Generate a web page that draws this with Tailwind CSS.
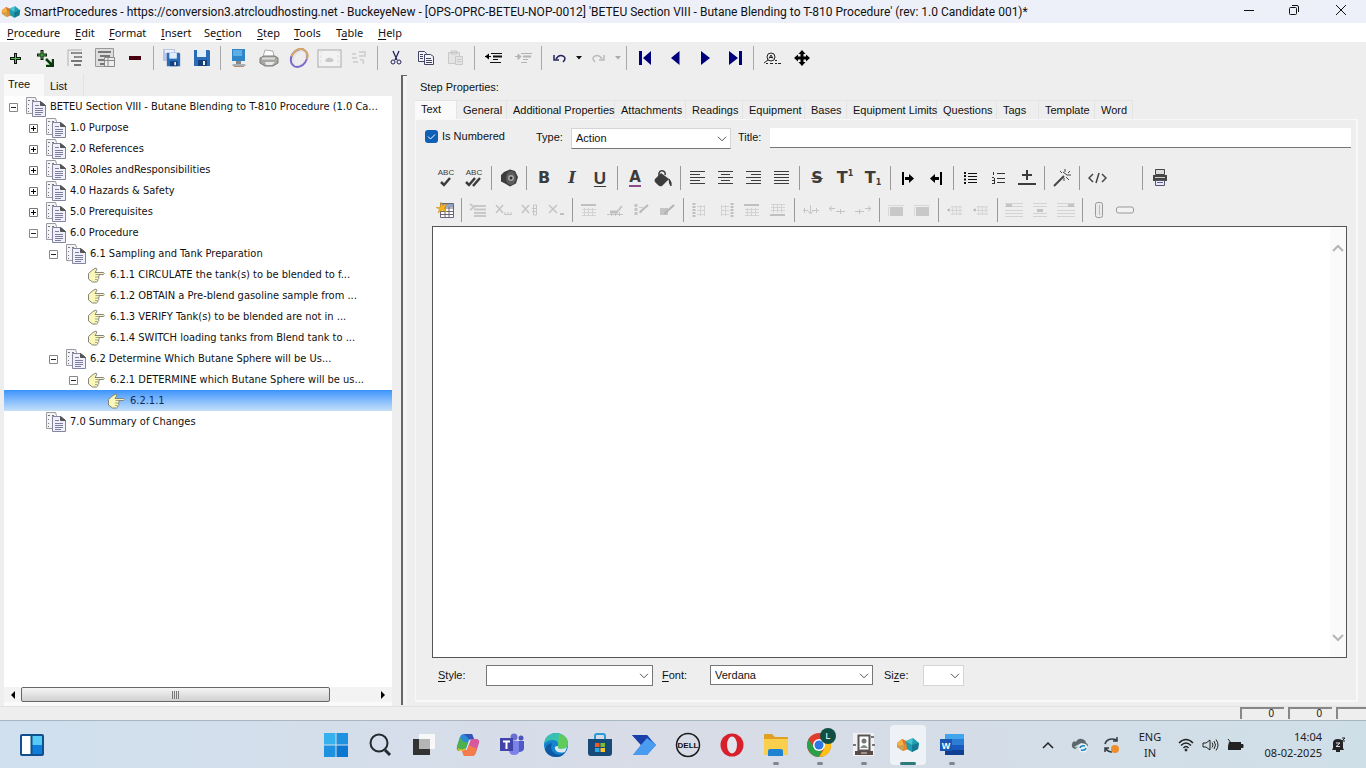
<!DOCTYPE html>
<html lang="en">
<head>
<meta charset="utf-8">
<title>SmartProcedures</title>
<script src="https://cdn.jsdelivr.net/npm/@tailwindcss/browser@4"></script>
</head>
<body class="h-screen flex flex-col overflow-hidden bg-[#eeeeee] text-[#111] font-['Liberation_Sans',sans-serif] text-[11px]">
<svg class="hidden" aria-hidden="true">
  <symbol id="logo" viewBox="0 0 24 16">
    <path d="M1 6 6 2 12 5 13 12 7 14 1 10z" fill="#e88a2a"/><path d="M1 6 6 2 8 8 2 9z" fill="#f6b04a"/><path d="M6 2 12 5 8 8z" fill="#d9752a"/><path d="M1 10 8 8 7 14z" fill="#c9a35a"/>
    <path d="M10 4 17 1 23 6 22 12 16 15 11 12z" fill="#1f9cb0"/><path d="M10 4 17 1 16 8z" fill="#4cc3cf"/><path d="M16 8 23 6 22 12 16 15z" fill="#157a92"/>
  </symbol>
  <symbol id="doc" viewBox="0 0 20 20">
    <path d="M.5 .5h9l1 3v13h-10z" fill="#f4f4f6" stroke="#9a9aa2"/><path d="M2 3.500h2M6 3.500h2M2 7.500h1M2 11.500h1M2 14.500h1" stroke="#777"/>
    <path d="M6.500 4.500h8l5 4v11h-13z" fill="#f0f0fa" stroke="#8484a0"/><path d="M14.500 4.500v4h5z" fill="#555" stroke="#555"/><path d="M9 8.500h4M9 11.500h8M9 13.500h8M9 15.500h8M9 17.500h6" stroke="#7d7da0"/>
  </symbol>
  <symbol id="hand" viewBox="0 0 20 18">
    <path d="M2.500 7.500 7 3.500l3-1.500q1.500 1 0 3l-1 1.500h8.500q1.500 1 0 2h-5q1.500 1.500 0 2.500 1 1.500-.5 2.500 0 2-1.500 2.500H6.500l-4-3z" fill="#fbf7b8" stroke="#84847a"/><path d="M9.500 8.500h3M9 11h3M9 13.500h2" stroke="#a5a58f"/>
  </symbol>
  <symbol id="plusbox" viewBox="0 0 9 9"><path d="M.5.5h8v8h-8z" fill="#fff" stroke="#777"/><path d="M2 4.500h5M4.500 2v5" stroke="#000"/></symbol>
  <symbol id="minusbox" viewBox="0 0 9 9"><path d="M.5.5h8v8h-8z" fill="#fff" stroke="#888"/><path d="M2 4.500h5" stroke="#222"/></symbol>
  <symbol id="chev" viewBox="0 0 10 6"><path d="M1 .8 5 4.800 9 .8" fill="none" stroke="#555"/></symbol>
  <symbol id="floppy" viewBox="0 0 18 18"><path d="M1 1h15l1 1v15H1z" fill="#2b6cb8"/><path d="M4 1h9v7H4z" fill="#dfeefa"/><path d="M5 11h9v6H5z" fill="#173f7a"/><path d="M10 12h2v4h-2z" fill="#e8f0fa"/></symbol>
  <symbol id="tgridtop" viewBox="0 0 18 16"><path d="M1 3h15" stroke="#c0c0c0" stroke-width="2"/><path d="M2 7.500h14M2 10.500h14M2 13.500h14M4.500 6v8M8.500 6v8M12.500 6v8" stroke="#d2d2d2" fill="none"/></symbol>
  <symbol id="tgridbot" viewBox="0 0 18 16"><path d="M1 13h15" stroke="#c0c0c0" stroke-width="2"/><path d="M2 2.500h14M2 5.500h14M2 8.500h14M4.500 2v9M8.500 2v9M12.500 2v9" stroke="#d2d2d2" fill="none"/></symbol>
  <symbol id="tdelx" viewBox="0 0 18 16"><path d="m1 3 7 8M8 3l-7 8" stroke="#c4c4c4" stroke-width="1.500"/><path d="M9 12.500h8M10 10v3M13 10v3M16 10v3" stroke="#c6c6c6"/></symbol>
  <symbol id="tdelc" viewBox="0 0 18 16"><path d="m1 3 7 8M8 3l-7 8" stroke="#c4c4c4" stroke-width="1.500"/><path d="M12.500 3h3v10h-3zM11 6.500h5M11 9.500h5" fill="none" stroke="#c6c6c6"/></symbol>
  <symbol id="tdel" viewBox="0 0 18 16"><path d="m2 3 8 8M10 3l-8 8" stroke="#c4c4c4" stroke-width="1.500"/><path d="M13 12h4" stroke="#c0c0c0" stroke-width="2"/></symbol>
  <symbol id="tbrushcol" viewBox="0 0 18 16"><path d="M4 2v12" stroke="#c4c4c4" stroke-width="3" stroke-dasharray="3 1"/><path d="M7 10.500h3M7 5.500h4" stroke="#ccc"/><path d="m8 10 8-7" stroke="#b8b8b8" stroke-width="2"/></symbol>
  <symbol id="tbrush" viewBox="0 0 18 16"><path d="M2 6h8v7H2z" fill="#c4c4c4"/><path d="m6 12 10-9" stroke="#b3b3b3" stroke-width="2"/></symbol>
  <symbol id="tcell" viewBox="0 0 18 16"><path d="M1 12.500h16M5.500 10v4M9.500 10v4M13.500 10v4" stroke="#c4c4c4"/><path d="M4 10h8" stroke="#c0c0c0" stroke-width="3"/><path d="m12 9 4-5" stroke="#c4c4c4" stroke-width="2"/></symbol>
  <symbol id="tcol" viewBox="0 0 18 16"><path d="M3 1v14" stroke="#c0c0c0" stroke-width="3" stroke-dasharray="2 1"/><path d="M6 4.500h8M6 8.500h8M6 12.500h8M9.500 3v11M13.500 3v11" stroke="#d2d2d2"/></symbol>
  <symbol id="tins" viewBox="0 0 18 16"><path d="M1 8.500h5M10 8.500h7M2.500 6v5M14.500 6v5M8.500 3v9M6 9l2.500 3L11 9" fill="none" stroke="#c6c6c6"/></symbol>
  <symbol id="tmerge" viewBox="0 0 18 16"><path d="M3 5h13v9H3z" fill="#c8c8c8"/><path d="M1 3.500h16M1.500 5v9" stroke="#d8d8d8"/></symbol>
  <symbol id="tsplit" viewBox="0 0 20 16"><path d="m4 6-3 2 3 2z" fill="#b0b0b0"/><path d="M5 4.500h13M5 8.500h13M5 12.500h13M7.500 4v9M11.500 4v9M15.500 4v9" stroke="#d0d0d0"/></symbol>
</svg>

<header class="h-[23px] shrink-0 flex items-center bg-[#eef0f9] pl-px">
  <svg class="w-5 h-4" aria-hidden="true"><use href="#logo"/></svg>
  <h1 class="ml-[3px] flex-1 whitespace-nowrap font-['Roboto',sans-serif] text-[12px]">SmartProcedures - https://conversion3.atrcloudhosting.net - BuckeyeNew - [OPS-OPRC-BETEU-NOP-0012] 'BETEU Section VIII - Butane Blending to T-810 Procedure' (rev: 1.0 Candidate 001)*</h1>
  <button aria-label="Minimize" class="w-[45px] pb-1 grid place-items-center"><svg width="12" height="12"><path d="M1 6.500h10" stroke="#111"/></svg></button>
  <button aria-label="Restore" class="w-[45px] pb-1 grid place-items-center"><svg width="12" height="12" fill="none" stroke="#111"><rect x="1.500" y="3.500" width="7" height="7" rx="1"/><path d="M4 1.500h5q1.500 0 1.500 1.500v5"/></svg></button>
  <button aria-label="Close" class="w-[50px] pb-1 grid place-items-center"><svg width="12" height="12" stroke="#111"><path d="m1 1 10 10M11 1 1 11"/></svg></button>
</header>

<nav class="h-[19px] shrink-0 flex items-center bg-white pl-[7px] pt-0.5 font-['Noto_Sans',sans-serif] text-[11px] [&_u]:underline-offset-2">
  <button class="w-[68px] text-left"><u>P</u>rocedure</button><button class="w-[34px] text-left"><u>E</u>dit</button><button class="w-[52px] text-left"><u>F</u>ormat</button><button class="w-[43px] text-left"><u>I</u>nsert</button><button class="w-[53px] text-left">Se<u>c</u>tion</button><button class="w-[37px] text-left"><u>S</u>tep</button><button class="w-[42px] text-left"><u>T</u>ools</button><button class="w-[42px] text-left">T<u>a</u>ble</button><button class="text-left"><u>H</u>elp</button>
</nav>

<div role="toolbar" aria-label="Main" class="h-8 shrink-0 flex items-center [&>button]:w-[30px] [&>button]:h-6 [&>button]:grid [&>button]:place-items-center [&>button]:shrink-0 [&>i]:w-px [&>i]:h-6 [&>i]:mx-[3px] [&>i]:bg-[#a8a8a8] [&>i]:shrink-0">
  <button aria-label="Add"><svg width="13" height="13"><path d="M6.500 1v11M1 6.500h11" stroke="#0a1a0a" stroke-width="3"/><path d="M6.500 2v9M2 6.500h9" stroke="#4fc04f" stroke-width="1"/></svg></button>
  <button aria-label="Add child"><svg width="18" height="18"><path d="M6 1v10M1 6h10" stroke="#0a1a0a" stroke-width="3"/><path d="M6 2v8M2 6h8" stroke="#4fc04f" stroke-width="1"/><path d="m10 10 6 6M17 10v7h-7" fill="none" stroke="#0a3a0a" stroke-width="2.500"/></svg></button>
  <button aria-label="Outline"><svg width="16" height="18" fill="none"><path d="M15 1H1v16" stroke="#b0b0b0"/><path d="M4 4h11M7 8h8M4 12h11M7 16h7" stroke="#777" stroke-width="2"/><path d="M5 4h9M8 8h6" stroke="#aaa"/></svg></button>
  <button aria-label="Details"><svg width="20" height="20"><path d="M.5.5h18v18H.500z" fill="#ddd" stroke="#999"/><path d="M3 4h13M5 8h10M3 12h6M5 16h4" stroke="#777" stroke-width="2"/><path d="M9.500 9.500h10v9h-10zM9.500 12.500h10M13 10v8" fill="#eee" stroke="#888"/></svg></button>
  <button aria-label="Remove"><svg width="12" height="4"><path d="M0 0h12v4H0z" fill="#4a0010"/></svg></button><i></i>
  <button aria-label="Save all"><svg width="20" height="18"><path d="M1 0h12v12H1z" fill="#b8c6e4"/><path d="M3 1h9v3H3z" fill="#eef"/><svg x="4" y="3" width="15" height="15"><use href="#floppy"/></svg></svg></button>
  <button aria-label="Save"><svg width="18" height="18"><use href="#floppy"/></svg></button><i></i>
  <button aria-label="Screen"><svg width="16" height="20"><path d="M1 1h13v12H1z" fill="#2e86c8"/><path d="M2 2h9v6H2z" fill="#5eaee4"/><path d="M5 13h5v3H5z" fill="#888"/><path d="M2 16h12l1 2H1z" fill="#a9b0b8"/><path d="M3 18.500h10" stroke="#b88a70"/></svg></button>
  <button aria-label="Print"><svg width="20" height="18"><path d="m6 1 8 1 1 6H4z" fill="#fff" stroke="#aaa"/><path d="M1 9 5 7h11l3 2v5l-5 3H6l-5-3z" fill="#a6a6a2" stroke="#7b7b7b"/><path d="M3 9.500h13" stroke="#ddd" stroke-width="2"/><path d="M6 13h10l-3 3H7z" fill="#e8e8e8"/></svg></button>
  <button aria-label="Ring"><svg width="22" height="22" fill="none"><g transform="rotate(35 11 11)"><ellipse cx="11" cy="11" rx="7.500" ry="9.500" stroke="#7a68c8" stroke-width="2"/><path d="M4 14Q2 3 11 1.500q6 0 7 6" stroke="#d8a860" stroke-width="2"/><ellipse cx="11.500" cy="11" rx="5.500" ry="8" stroke="#e2dcea"/></g></svg></button>
  <button aria-label="Preview" disabled><svg width="25" height="19" fill="none"><rect x="1" y="1" width="23" height="17" stroke="#aaa" fill="#f3f3f3"/><path d="M4 1v17M21 1v17" stroke="#ddd" stroke-dasharray="3 2"/><path d="M8 11q4-5 9 0l-2 2H9z" fill="#c9c9c9"/></svg></button>
  <button aria-label="Refresh" disabled><svg width="16" height="16"><path d="M1 4h4M8 2h6v4H8M1 8h5M2 12h5M9 10q5-1 3 4" stroke="#d4d4d4" stroke-width="2" fill="none"/></svg></button><i></i>
  <button aria-label="Cut"><svg width="12" height="16" fill="none" stroke="#23235e"><path d="m3 1 4 9M9 1 5 10" stroke-width="1.300"/><circle cx="3" cy="12" r="2"/><circle cx="9" cy="12" r="2"/></svg></button>
  <button aria-label="Copy"><svg width="18" height="16" fill="#f4f4fa" stroke="#444466"><path d="M1.500 1.500h6l2 2v8h-8z"/><path d="M7.500 4.500h6l3 2v8h-9z"/><path d="M9 8.500h5M9 10.500h6M9 12.500h6M3 4.500h3M3 6.500h3M3 8.500h3"/></svg></button>
  <button aria-label="Paste" disabled><svg width="18" height="16" fill="#e4e4e4" stroke="#c9c9c9"><path d="M1.500 2.500h11v11h-11zM4 1h6v3H4z"/><path d="M8.500 6.500h7v8h-7z"/><path d="M10 9.500h4M10 11.500h4"/></svg></button><i></i>
  <button aria-label="Outdent"><svg width="17" height="14" stroke="#111"><path d="M0 5.500h6M6 2.500h11M8 8.500h5M5 11.500h11"/><path d="M8 5.500h9" stroke-width="2"/><path d="M4 2.500 0 5.500l4 3z" stroke="none"/></svg></button>
  <button aria-label="Indent" disabled><svg width="17" height="14" stroke="#b4b4b4"><path d="M0 5.500h6M6 2.500h11M8 8.500h5M6 11.500h6"/><path d="M8 5.500h8" stroke-width="2"/><path d="m3 3 3 2.500-3 3z" fill="#b4b4b4"/></svg></button><i></i>
  <div class="flex items-center [&>button]:h-6 [&>button]:grid [&>button]:place-items-center">
    <button aria-label="Undo" class="w-7"><svg width="13" height="10" fill="none" stroke="#23235e" stroke-width="1.500"><path d="M3 6q3-5 7-3t0 6"/><path d="M1 2v5h5" /></svg></button>
    <button aria-label="Undo list" class="w-[11px]"><svg width="6" height="4"><path d="M0 0h6L3 3.500z" fill="#111"/></svg></button>
    <button aria-label="Redo" disabled class="w-7"><svg width="13" height="10" fill="none" stroke="#bbb" stroke-width="1.500"><path d="M10 6Q7 1 3 3t0 6"/><path d="M12 2v5H7"/></svg></button>
    <button aria-label="Redo list" disabled class="w-[11px]"><svg width="6" height="4"><path d="M0 0h6L3 3.500z" fill="#aaa"/></svg></button>
  </div><i></i>
  <button aria-label="First"><svg width="13" height="14" fill="#00007c"><path d="M0 0h3v14H0zM12 0v14L4 7z"/></svg></button>
  <button aria-label="Previous"><svg width="9" height="14" fill="#00007c"><path d="M8.500 0v14L0 7z"/></svg></button>
  <button aria-label="Next"><svg width="9" height="14" fill="#00007c"><path d="M0 0v14l9-7z"/></svg></button>
  <button aria-label="Last"><svg width="13" height="14" fill="#00007c"><path d="M10 0h3v14h-3zM0 0v14l9-7z"/></svg></button><i></i>
  <button aria-label="Find"><svg width="17" height="12" fill="none" stroke="#222"><circle cx="7" cy="5" r="4"/><path d="m4 8-4 3M5 6.500 7 3l2 3.500M6 5.500h2M2 11.500h2M6 11.500h3M11 8.500h2M11 11.500h2M14 11.500h3"/></svg></button>
  <button aria-label="Move"><svg width="16" height="16"><path d="M8 2v12M2 8h12" stroke="#000" stroke-width="3"/><path d="m8 0 3.500 4h-7zM8 16l3.500-4h-7zM0 8l4-3.500v7zM16 8l-4-3.500v7z"/></svg></button>
</div>

<main class="flex-1 min-h-0 flex">
  <section class="w-[397px] shrink-0 flex flex-col pl-1">
    <div role="tablist" class="h-[22px] flex">
      <button role="tab" aria-selected="true" class="w-10 pl-1 text-left bg-[#f9f9f9] pb-0.5">Tree</button>
      <button role="tab" class="w-10 pl-1.5 pt-0.5 text-left border-r border-[#e2e2e2]">List</button>
    </div>
    <ul role="tree" class="flex-1 bg-white mr-[5px] font-['DejaVu_Sans_Condensed','DejaVu_Sans',sans-serif] text-[11px] [&>li]:h-[21px] [&>li]:flex [&>li]:items-center [&>li]:whitespace-nowrap [&>li]:pt-px [&_.x]:w-[9px] [&_.x]:h-[9px] [&_.x]:mr-2 [&_.d]:w-5 [&_.d]:h-5 [&_.d]:mr-1 [&_.h]:w-5 [&_.h]:h-[18px] [&_.h]:mr-1">
      <li role="treeitem" class="pl-[5px]"><svg class="x"><use href="#minusbox"/></svg><svg class="d"><use href="#doc"/></svg><span class="pt-px">BETEU Section VIII - Butane Blending to T-810 Procedure (1.0 Ca...</span></li>
      <li role="treeitem" class="pl-[25px]"><svg class="x"><use href="#plusbox"/></svg><svg class="d"><use href="#doc"/></svg><span class="pt-px">1.0 Purpose</span></li>
      <li role="treeitem" class="pl-[25px]"><svg class="x"><use href="#plusbox"/></svg><svg class="d"><use href="#doc"/></svg><span class="pt-px">2.0 References</span></li>
      <li role="treeitem" class="pl-[25px]"><svg class="x"><use href="#plusbox"/></svg><svg class="d"><use href="#doc"/></svg><span class="pt-px">3.0Roles andResponsibilities</span></li>
      <li role="treeitem" class="pl-[25px]"><svg class="x"><use href="#plusbox"/></svg><svg class="d"><use href="#doc"/></svg><span class="pt-px">4.0 Hazards &amp; Safety</span></li>
      <li role="treeitem" class="pl-[25px]"><svg class="x"><use href="#plusbox"/></svg><svg class="d"><use href="#doc"/></svg><span class="pt-px">5.0 Prerequisites</span></li>
      <li role="treeitem" class="pl-[25px]"><svg class="x"><use href="#minusbox"/></svg><svg class="d"><use href="#doc"/></svg><span class="pt-px">6.0 Procedure</span></li>
      <li role="treeitem" class="pl-[45px]"><svg class="x"><use href="#minusbox"/></svg><svg class="d"><use href="#doc"/></svg><span class="pt-px">6.1 Sampling and Tank Preparation</span></li>
      <li role="treeitem" class="pl-[82px]"><svg class="h"><use href="#hand"/></svg><span class="pt-px">6.1.1 CIRCULATE the tank(s) to be blended to f...</span></li>
      <li role="treeitem" class="pl-[82px]"><svg class="h"><use href="#hand"/></svg><span class="pt-px">6.1.2 OBTAIN a Pre-blend gasoline sample from ...</span></li>
      <li role="treeitem" class="pl-[82px]"><svg class="h"><use href="#hand"/></svg><span class="pt-px">6.1.3 VERIFY Tank(s) to be blended are not in ...</span></li>
      <li role="treeitem" class="pl-[82px]"><svg class="h"><use href="#hand"/></svg><span class="pt-px">6.1.4 SWITCH loading tanks from Blend tank to ...</span></li>
      <li role="treeitem" class="pl-[45px]"><svg class="x"><use href="#minusbox"/></svg><svg class="d"><use href="#doc"/></svg><span class="pt-px">6.2 Determine Which Butane Sphere will be Us...</span></li>
      <li role="treeitem" class="pl-[65px]"><svg class="x"><use href="#minusbox"/></svg><svg class="h"><use href="#hand"/></svg><span class="pt-px">6.2.1 DETERMINE which Butane Sphere will be us...</span></li>
      <li role="treeitem" aria-selected="true" class="pl-[102px] bg-linear-to-b from-[#3893fb] to-[#c5e0f8] text-[#0a2c5e]"><svg class="h"><use href="#hand"/></svg><span class="pt-px">6.2.1.1</span></li>
      <li role="treeitem" class="pl-[42px]"><svg class="d"><use href="#doc"/></svg><span class="pt-px">7.0 Summary of Changes</span></li>
    </ul>
    <div class="h-[15px] mr-[5px] flex items-center bg-[#f3f3f3]">
      <button aria-label="Scroll left" class="w-[17px] grid place-items-center"><svg width="4" height="8"><path d="M4 0v8L0 4z"/></svg></button>
      <div class="w-[309px] h-[15px] rounded-[2px] border border-[#666] bg-linear-to-b from-[#f5f5f5] to-[#d0d0d0] flex justify-center items-center gap-px"><i class="w-px h-2 bg-[#777]"></i><i class="w-px h-2 bg-[#777]"></i><i class="w-px h-2 bg-[#777]"></i><i class="w-px h-2 bg-[#777]"></i></div>
      <span class="flex-1"></span>
      <button aria-label="Scroll right" class="w-[19px] grid place-items-center"><svg width="4" height="8"><path d="M0 0v8l4-4z"/></svg></button>
    </div>
    <div class="h-1 bg-[#fafafa] mr-[5px]"></div>
  </section>
  <div class="w-[6px] my-px ml-1 mr-2 border-l-2 border-t border-[#666] border-r-[#fff] bg-[#f3f3f3] shrink-0"></div>

  <section class="flex-1 min-w-0 flex flex-col pr-2 pb-1">
    <h2 class="h-[26px] pl-[5px] leading-[26px]">Step Properties:</h2>
    <div role="tablist" class="h-[19px] flex [&>button]:text-left [&>button]:pl-1.5 [&>button]:border-r [&>button]:border-t [&>button]:border-[#e4e4e4] [&>button]:whitespace-nowrap">
      <button role="tab" aria-selected="true" class="w-[42px] bg-[#fafafa] pb-1">Text</button><button role="tab" class="w-[50px]">General</button><button role="tab" class="w-[108px]">Additional Properties</button><button role="tab" class="w-[71px]">Attachments</button><button role="tab" class="w-[57px]">Readings</button><button role="tab" class="w-[62px]">Equipment</button><button role="tab" class="w-[42px]">Bases</button><button role="tab" class="w-[90px]">Equipment Limits</button><button role="tab" class="w-[60px]">Questions</button><button role="tab" class="w-[42px]">Tags</button><button role="tab" class="w-[56px]">Template</button><button role="tab" class="w-[38px]">Word</button>
    </div>
    <div role="tabpanel" class="flex-1 min-h-0 flex flex-col border border-[#f8f8f8] border-b-2 border-r-2 pl-4 pr-[5px] pt-[7px]">
      <div class="h-[22px] shrink-0 flex items-center">
        <label class="-ml-[7px] flex items-center gap-1 w-[111px] pb-1 whitespace-nowrap"><span class="grid"><input type="checkbox" checked class="col-start-1 row-start-1 appearance-none w-[13px] h-[13px] rounded-[3px] bg-[#0f5fb4]"><svg class="col-start-1 row-start-1 pointer-events-none" width="13" height="13" fill="none" stroke="#fff"><path d="m3 6.500 2.500 2.500L10 4.500"/></svg></span>Is Numbered</label>
        <label for="type" class="w-[35px] pb-0.5 whitespace-nowrap">Type:</label>
        <div class="relative"><select id="type" class="block appearance-none w-40 h-[21px] bg-white border border-[#d5d5d5] border-b-[#777] pl-1 leading-none"><option>Action</option></select><svg class="absolute right-1 top-2 w-[10px] h-[6px] pointer-events-none"><use href="#chev"/></svg></div>
        <label for="title" class="ml-[7px] w-8 pb-0.5">Title:</label>
        <input id="title" class="flex-1 min-w-0 h-[20px] bg-white border-b border-[#777] px-1">
      </div>
      <div role="toolbar" aria-label="Formatting" class="mt-4 h-[26px] shrink-0 flex items-center text-[#3c3c3c] [&>button]:w-7 [&>button]:h-6 [&>button]:grid [&>button]:place-items-center [&>button]:shrink-0 [&>i]:w-px [&>i]:h-6 [&>i]:mx-[3px] [&>i]:bg-[#999] [&>i]:shrink-0">
        <button aria-label="Spelling"><span class="grid justify-items-center text-[8px] leading-[8px]">ABC<svg width="12" height="10" fill="none" stroke="#3c3c3c" stroke-width="2.500"><path d="m1 5 3 3 6-7"/></svg></span></button>
        <button aria-label="Spelling all"><span class="grid justify-items-center text-[8px] leading-[8px]">ABC<svg width="18" height="10" fill="none" stroke="#3c3c3c" stroke-width="2.500"><path d="m1 5 3 3 6-7M8 9l7-8"/></svg></span></button><i></i>
        <button aria-label="Speak"><svg width="18" height="18"><path d="M4 3 10 .5l5 1.500 3 6-2 6.500-6 3-5-3-4-2V6z" fill="#3d3d3d"/><ellipse cx="11" cy="9" rx="5" ry="7" fill="#5c5c5c"/><circle cx="11" cy="9" r="3" fill="#aaa"/><circle cx="11" cy="9" r="1.500" fill="#333"/></svg></button><i></i>
        <button aria-label="Bold" class="font-['DejaVu_Sans',sans-serif] font-bold text-[16px]">B</button>
        <button aria-label="Italic" class="font-['DejaVu_Serif',serif] font-bold italic text-[16px]">I</button>
        <button aria-label="Underline" class="font-bold underline underline-offset-2 text-[17px]">U</button><i></i>
        <button aria-label="Text color" class="font-['DejaVu_Sans',sans-serif] font-bold text-[15px]"><span class="leading-4 border-b-2 border-[#8c4a8c]">A</span></button>
        <button aria-label="Fill"><svg width="18" height="18"><path d="M5 8V4q1-3 4-2t2 4" fill="none" stroke="#3c3c3c" stroke-width="1.500"/><path d="m7 4 8 6-7 7q-2 1-4-1l-3-3q-1-2 0-3z" fill="#3c3c3c"/><path d="M15 10q3 3 2 7-2-2-2-7" fill="#3c3c3c" stroke="#3c3c3c"/></svg></button><i></i>
        <button aria-label="Align left"><svg width="16" height="14" stroke="#3c3c3c"><path d="M0 .5h15M0 3.500h10M0 6.500h15M0 9.500h10M0 12.500h15"/></svg></button>
        <button aria-label="Align center"><svg width="16" height="14" stroke="#3c3c3c"><path d="M0 .5h15M3 3.500h9M0 6.500h15M3 9.500h9M0 12.500h15"/></svg></button>
        <button aria-label="Align right"><svg width="16" height="14" stroke="#3c3c3c"><path d="M0 .5h15M5 3.500h10M0 6.500h15M5 9.500h10M0 12.500h15"/></svg></button>
        <button aria-label="Justify"><svg width="16" height="14" stroke="#3c3c3c"><path d="M0 .5h15M0 3.500h15M0 6.500h15M0 9.500h15M0 12.500h15"/></svg></button><i></i>
        <button aria-label="Strikethrough" class="font-['DejaVu_Sans',sans-serif] font-bold line-through decoration-1 text-[16px]">S</button>
        <button aria-label="Superscript" class="font-['DejaVu_Sans',sans-serif] font-bold text-[16px]"><span class="flex items-start leading-4">T<small class="text-[8px] leading-[8px]">1</small></span></button>
        <button aria-label="Subscript" class="font-['DejaVu_Sans',sans-serif] font-bold text-[16px]"><span class="flex items-end leading-4">T<small class="text-[8px] leading-[6px]">1</small></span></button><i></i>
        <button aria-label="Increase indent"><svg width="12" height="13"><path d="M0 0h2v13H0zM3 5h4V2l5 4.500L7 11V8H3z" fill="#000"/></svg></button>
        <button aria-label="Decrease indent"><svg width="12" height="13"><path d="M10 0h2v13h-2zM9 5H5V2L0 6.500 5 11V8h4z" fill="#000"/></svg></button><i></i>
        <button aria-label="Bullets"><svg width="14" height="12" stroke="#111"><path d="M0 1h2M0 4h2M0 7.500h2M0 11h2" stroke-width="2"/><path d="M4 1.500h9M4 4.500h9M4 7.500h9M4 10.500h9"/></svg></button>
        <button aria-label="Numbering"><svg width="14" height="12" stroke="#333"><path d="M1.500 0v3M0 5.500h2M0 8.500h3M0 11.500h3M2.500 6v6M5 1.500h8M5 6.500h8M5 10.500h8"/></svg></button>
        <button aria-label="Insert line"><svg width="18" height="16" stroke="#3c3c3c" stroke-width="2"><path d="M9 0v10M4 5h10M0 14h18"/></svg></button><i></i>
        <button aria-label="Clean up"><svg width="18" height="18" stroke="#444" fill="none"><path d="m1 17 10-10" stroke-width="2"/><path d="M12 0v3M7 2l2 2M17 2l-2 2M14 6h4M13 8l3 3M11 9v3M10 3l4 3"/></svg></button><i></i>
        <button aria-label="Source"><svg width="19" height="12" fill="none" stroke="#444" stroke-width="1.500"><path d="M5 2 1 6l4 4M14 2l4 4-4 4M11 1 8 11"/></svg></button><span class="w-7 shrink-0"></span><i></i>
        <button aria-label="Print"><svg width="14" height="18"><path d="M2.500.5h9v5h-9z" fill="#ddd" stroke="#444"/><path d="M0 6h14v6H0z" fill="#444"/><path d="M2 8.500h10" stroke="#ccc"/><path d="M2.500 11.500h9v5h-9z" fill="#e8e8ff" stroke="#556"/><path d="M4 13.500h6" stroke="#669"/></svg></button>
      </div>
      <div role="toolbar" aria-label="Table" class="mt-[7px] h-6 shrink-0 flex items-center [&>button]:w-[26px] [&>button]:h-6 [&>button]:grid [&>button]:place-items-center [&>button]:shrink-0 [&_svg]:w-[18px] [&_svg]:h-4 [&>i]:w-px [&>i]:h-6 [&>i]:mx-[3px] [&>i]:bg-[#999] [&>i]:shrink-0">
        <button aria-label="Insert table"><svg viewBox="0 0 18 16"><path d="M4.500 1.500h13v14h-13zM4.500 6h13M4.500 9.500h13M4.500 12.500h13M9 3v12M13 3v12" fill="#fff" stroke="#667"/><path d="M5 2h12v3H5z" fill="#8fa4c4"/><path d="m5 0 1.500 3.500L11 2 8.500 6l2 4L6 8l-4 3 1.500-4L0 5.500h4z" fill="#f5b51e" stroke="#c98a10" stroke-width=".5"/></svg></button><i></i>
        <button disabled aria-label="Insert row"><svg viewBox="0 0 18 16"><path d="m1 2 4 3-4 3M5 4h12M5 7.500h12M5 11h12M5 14h12" stroke="#c8c8c8" fill="none" stroke-width="2"/></svg></button>
        <button disabled aria-label="Delete row"><svg><use href="#tdelx"/></svg></button><button disabled aria-label="Delete column"><svg><use href="#tdelc"/></svg></button><button disabled aria-label="Delete cell"><svg><use href="#tdel"/></svg></button><i></i>
        <button disabled aria-label="Table properties"><svg><use href="#tgridtop"/></svg></button><button disabled aria-label="Row properties"><svg><use href="#tcell"/></svg></button><button disabled aria-label="Column properties"><svg><use href="#tbrushcol"/></svg></button><button disabled aria-label="Cell properties"><svg><use href="#tbrush"/></svg></button><i></i>
        <button disabled aria-label="Column left"><svg><use href="#tcol"/></svg></button><button disabled aria-label="Column right"><svg class="-scale-x-100"><use href="#tcol"/></svg></button><button disabled aria-label="Row above"><svg><use href="#tgridtop"/></svg></button><button disabled aria-label="Row below"><svg><use href="#tgridbot"/></svg></button><i></i>
        <button disabled aria-label="Insert cell"><svg><use href="#tins"/></svg></button><button disabled aria-label="Insert cell left"><svg viewBox="0 0 18 16"><path d="M1 6.500h6M4 4 1 6.500 4 9M8 9.500h9M12.500 7v5" fill="none" stroke="#c3c3c3"/></svg></button><button disabled aria-label="Insert cell right"><svg viewBox="0 0 18 16"><path d="M1 9.500h9M5.500 7v5M11 6.500h6M14 4l3 2.500L14 9" fill="none" stroke="#c3c3c3"/></svg></button><i></i>
        <button disabled aria-label="Merge cells"><svg><use href="#tmerge"/></svg></button><button disabled aria-label="Merge down"><svg><use href="#tmerge"/></svg></button><i></i>
        <button disabled aria-label="Split left"><svg><use href="#tsplit"/></svg></button><button disabled aria-label="Split right"><svg><use href="#tsplit"/></svg></button><i></i>
        <button disabled aria-label="Align top"><svg viewBox="0 0 18 16"><path d="M0 1.500h18M0 4.500h18M0 8.500h18M0 11.500h18M0 14.500h18" stroke="#d2d2d2"/><path d="M1 2h6v3H1z" fill="#c4c4c4"/></svg></button><button disabled aria-label="Align middle"><svg viewBox="0 0 18 16"><path d="M2 1.500h14M2 4.500h14M2 11.500h14M2 14.500h14" stroke="#d2d2d2"/><path d="M6 7h6v3H6z" fill="#c4c4c4"/></svg></button><button disabled aria-label="Align bottom"><svg viewBox="0 0 18 16"><path d="M0 1.500h18M0 4.500h18M0 8.500h18M0 11.500h18M0 14.500h18" stroke="#d2d2d2"/><path d="M11 2h6v3h-6z" fill="#c4c4c4"/></svg></button><i></i>
        <button aria-label="Vertical field"><svg viewBox="0 0 18 16"><rect x="5.500" y=".5" width="7" height="15" rx="2" fill="#eaeaea" stroke="#999"/><path d="M9.500 3v10" stroke="#bbb"/></svg></button><button aria-label="Horizontal field"><svg viewBox="0 0 18 16"><rect x=".5" y="5" width="17" height="6" rx="2" fill="#f2f2f2" stroke="#999"/></svg></button>
      </div>
      <div class="mt-1 mr-[4px] flex-1 min-h-0 flex border border-[#555] bg-white">
        <textarea aria-label="Step text" class="flex-1 resize-none outline-none p-1"></textarea>
        <div class="w-4 bg-[#fafafa] flex flex-col justify-between items-center pt-[17px] pb-[15px] [&_svg]:w-3 [&_svg]:h-2">
          <button aria-label="Scroll up" class="flex"><svg viewBox="0 0 12 8" fill="none" stroke="#b5b5b5" stroke-width="2"><path d="m1 7 5-5 5 5"/></svg></button>
          <button aria-label="Scroll down" class="flex"><svg viewBox="0 0 12 8" fill="none" stroke="#b5b5b5" stroke-width="2"><path d="m1 1 5 5 5-5"/></svg></button>
        </div>
      </div>
      <div class="h-[42px] shrink-0 flex items-start pt-[7px] pl-1.5 [&>label]:leading-5 [&_u]:underline-offset-2">
        <label for="style" class="w-[48px]"><u>S</u>tyle:</label>
        <div class="relative"><select id="style" class="block appearance-none w-[167px] h-[21px] bg-white border border-[#777] pl-1 leading-none"><option></option></select><svg class="absolute right-1 top-2 w-[10px] h-[6px] pointer-events-none"><use href="#chev"/></svg></div>
        <label for="font" class="ml-[9px] w-[48px]"><u>F</u>ont:</label>
        <div class="relative"><select id="font" class="block appearance-none w-[163px] h-[20px] bg-white border border-[#777] pl-1 leading-none"><option>Verdana</option></select><svg class="absolute right-1 top-2 w-[10px] h-[6px] pointer-events-none"><use href="#chev"/></svg></div>
        <label for="size" class="ml-[11px] w-[39px]">Si<u>z</u>e:</label>
        <div class="relative"><select id="size" class="block appearance-none w-[41px] h-[21px] bg-white border border-[#d5d5d5] leading-none"><option></option></select><svg class="absolute right-1 top-2 w-[10px] h-[6px] pointer-events-none"><use href="#chev"/></svg></div>
      </div>
    </div>
  </section>
</main>

<footer class="h-[14px] shrink-0 flex justify-end gap-1 border-t border-[#e2e2e2] text-[10px] [&>span]:w-[44px] [&>span]:h-[12px] [&>span]:border-l-2 [&>span]:border-t-2 [&>span]:border-[#888] [&>span]:leading-[10px] [&>span]:text-right [&>span]:pr-2.5">
  <span>0</span><span>0</span><div class="w-[30px] h-[12px] border-l-2 border-t-2 border-[#888]"></div>
</footer>

<div class="h-12 shrink-0 flex items-center border-t border-[#a9b6c2] bg-linear-to-r from-[#d0e0ee] via-[#d8dce7] to-[#cfdfe8] font-['Noto_Sans',sans-serif] [&_button]:shrink-0">
  <div class="w-[314px] pl-5 flex shrink-0"><button aria-label="Widgets"><svg width="24" height="22"><rect x="1" y="1" width="22" height="20" rx="1" fill="#fff" stroke="#10508e" stroke-width="2"/><path d="M12 2h10v9H12z" fill="#57cbf5"/><path d="M12 11h10v9H12z" fill="#0f7edb"/><path d="M11.500 1v20" stroke="#10508e" stroke-width="2"/></svg></button></div>
  <div class="flex [&>button]:w-11 [&>button]:h-[46px] [&>button]:grid [&>button]:place-items-center [&>button]:relative [&_s]:absolute [&_s]:bottom-[3px] [&_s]:h-[3px] [&_s]:w-1.5 [&_s]:rounded-full [&_s]:bg-[#7d8590]">
    <button aria-label="Start"><svg width="24" height="24"><path d="M0 0h11.500v11.500H0z" fill="#35b2ee"/><path d="M12.500 0H24v11.500H12.500z" fill="#1e92e0"/><path d="M0 12.500h11.500V24H0z" fill="#1e92e0"/><path d="M12.500 12.500H24V24H12.500z" fill="#0a78d0"/></svg></button>
    <button aria-label="Search"><svg width="24" height="24" fill="none" stroke="#222b30"><circle cx="11" cy="10" r="8.500" stroke-width="2"/><path d="m17 17 5 5" stroke-width="3"/></svg></button>
    <button aria-label="Task view"><svg width="24" height="24"><path d="M7 1h16v15H7z" fill="#f8f8f8"/><path d="M1 6h17v16H1z" fill="#333"/><path d="M7 6h11v10H7z" fill="#b5b5b5"/></svg></button>
    <button aria-label="Copilot"><svg width="24" height="24"><path d="M8 1h8l2 5-5 1-4 11H4q-4 0-3-4L4 4q1-3 4-3" fill="#2b8ad8"/><path d="m1 13 3-9q2 6 8 5l-3 9H4q-4 0-3-5" fill="#4cb050"/><path d="M2 15q3 3 8 0l-1 3H4q-2 0-2-3" fill="#f2c12e"/><path d="M16 23H8l-2-5 5-1 4-11h5q4 0 3 4l-3 9q-1 4-4 4" fill="#d8589e"/><path d="M16 23H8l-2-5 5-1 2-5 8 4-1 3q-1 4-4 4" fill="#f27d4a"/><path d="M8 1h8l2 5h-5z" fill="#3454b8"/></svg></button>
    <button aria-label="Teams"><svg width="24" height="24"><circle cx="14" cy="4" r="3.500" fill="#6a6fd0"/><circle cx="21" cy="5" r="2.500" fill="#4b53bc"/><path d="M9 8h11v9q-1 5-6 5t-5-5z" fill="#7b83eb"/><path d="M19 8h5v8q-1 3-5 3z" fill="#5059c9"/><path d="M0 5h13v13H0z" fill="#4145a8"/><path d="M3 8.500h7M6.500 9v7" stroke="#fff" stroke-width="2"/></svg></button>
    <button aria-label="Edge"><svg width="24" height="24"><circle cx="12" cy="12" r="12" fill="#1584cf"/><path d="M0 11Q2 0 12 0t12 10q0 6-7 6-4 0-3-3 1-6-5-6-6 0-9 4" fill="#38c1b0"/><path d="M15 1q9 2 9 9 0 6-7 6-4 0-3-3z" fill="#5ecb5a"/><path d="M8 10q-3 8 4 11 5 2 9-2-2 5-9 5-8 0-11-7 1-6 7-7" fill="#0c59a4"/><path d="M14 13q-1 3 3 3 4 0 6-2l-2 5q-8 2-10-3-1-3 3-3" fill="#dce8f0"/></svg></button>
    <button aria-label="Store"><svg width="24" height="24"><path d="M7 7V3q0-2 2-2h6q2 0 2 2v4" fill="none" stroke="#2b9ad8" stroke-width="2"/><path d="M0 6h24v14q0 3-3 3H3q-3 0-3-3z" fill="#164a78"/><path d="M7 10h4.500v4H7z" fill="#f05a28"/><path d="M12.500 10H17v4h-4.500z" fill="#80ba30"/><path d="M7 15h4.500v4H7z" fill="#2ca4e8"/><path d="M12.500 15H17v4h-4.500z" fill="#fcc42a"/></svg></button>
    <button aria-label="Power Automate"><svg width="24" height="22"><path d="M0 1h15l9 10-9 10H1l8-10z" fill="#2a6be0"/><path d="M0 1h15l4 5-6 5H9z" fill="#1a3fa8"/><path d="m1 21 8-10 6-7 9 7-9 10z" fill="#4a9cf0"/></svg></button>
    <button aria-label="Dell"><svg width="26" height="26"><circle cx="13" cy="13" r="11.500" fill="none" stroke="#1a1a1a" stroke-width="1.500"/><text x="13" y="16" text-anchor="middle" font-family="Liberation Sans" font-weight="bold" font-size="8" fill="#111">DELL</text></svg></button>
    <button aria-label="Opera"><svg width="24" height="24"><circle cx="12" cy="12" r="11.500" fill="#d8202c"/><ellipse cx="12" cy="12" rx="5" ry="8.500" fill="#e4e4ec"/></svg></button>
    <button aria-label="File Explorer"><svg width="26" height="24"><path d="M1 2q0-1 1-1h7l3 3h12q1 0 1 1v17H1z" fill="#e0a020"/><path d="M1 6h24v15q0 1-1 1H2q-1 0-1-1z" fill="#fbcf4e"/><path d="M5 23v-5q0-2 2-2h11q2 0 2 2v5z" fill="#1e82d0"/></svg><s></s></button>
    <button aria-label="Chrome"><svg width="32" height="38" viewBox="0 0 32 38"><circle cx="15" cy="19" r="12" fill="#e33b2e"/><path d="M4.500 13q-4 10 4 16 3 2 6.500 2l4-9-9-1z" fill="#2aa04a"/><path d="M15 31q12-1 12-12 0-3-1-5H15l5 9z" fill="#fbc116"/><circle cx="15" cy="19" r="6" fill="#fff"/><circle cx="15" cy="19" r="4.500" fill="#2b78e4"/><circle cx="24" cy="10" r="8" fill="#0f4f44"/><text x="24" y="13" text-anchor="middle" font-family="Liberation Sans" font-size="9" fill="#fff">L</text></svg><s></s></button>
    <button aria-label="Printer utility"><svg width="24" height="24"><path d="M1 0h21v23H1z" fill="#f2f0f0"/><path d="M6.500 2.500h11v15h-11z" fill="#fff" stroke="#555" stroke-width="2"/><circle cx="12" cy="8" r="2.500" fill="#777"/><path d="M8 15q4-6 8 0" fill="#888"/><path d="M3 18h18v4H3z" fill="#5a4a48"/><path d="M9 20h6" stroke="#ddd"/><path d="M1 12h3M19 4h3M20 12h3" stroke="#777" stroke-width="2"/></svg><s></s></button>
    <button aria-label="SmartProcedures"><span class="bg-white/60 rounded w-9 h-10 grid place-items-center"><svg width="24" height="18"><use href="#logo"/></svg></span><b class="absolute bottom-[3px] h-[3px] w-4 rounded-full bg-[#2f7a78]"></b></button>
    <button aria-label="Word"><svg width="26" height="24"><path d="M6 1h19v6H6z" fill="#41a5ee"/><path d="M6 6h19v6H6z" fill="#2b7cd3"/><path d="M6 12h19v5H6z" fill="#185abd"/><path d="M6 17h19v5H6z" fill="#103f91"/><path d="M1 6h12v12H1z" fill="#1b56b0"/><text x="7" y="15.500" text-anchor="middle" font-family="Liberation Sans" font-weight="bold" font-size="9" fill="#fff">W</text></svg><s></s></button>
  </div>
  <span class="flex-1"></span>
  <div class="flex items-center shrink-0 pr-5 text-[#222] text-[11px] leading-4">
    <button aria-label="Hidden icons" class="w-8 grid place-items-center"><svg width="12" height="8" fill="none" stroke="#222" stroke-width="1.500"><path d="m1 7 5-5 5 5"/></svg></button>
    <button aria-label="Cloud" class="w-8 grid place-items-center"><svg width="18" height="16"><path d="M4 12q-4-1-3-5t4-2q2-4 6-3t4 4q3 1 1 4l-7-1z" fill="#5a686e"/><path d="m3 10 7-4 6 2-2 4z" fill="#d0d8dc"/><circle cx="12" cy="11" r="4.500" fill="#e8f2f8"/><path d="M9 11q1-3 5-2M15 11q-1 3-5 2" fill="none" stroke="#1784bd" stroke-width="1.500"/></svg></button>
    <button aria-label="Updates" class="w-8 grid place-items-center"><svg width="18" height="18"><path d="M2 8q2-7 12-4M14 1v4h-4M2 16v-4h4M2 12q3 4 7 4" fill="none" stroke="#333c44" stroke-width="1.500"/><circle cx="12" cy="13" r="4" fill="#ee8d2a"/></svg></button>
    <button class="w-11 text-center">ENG<br>IN</button>
    <button aria-label="Network, volume and battery" class="w-[78px] flex items-center justify-center gap-2">
      <svg width="16" height="14" fill="none" stroke="#222"><path d="M1 5q7-7 14 0M3 7.500q5-5 10 0M5.500 10q2.500-3 5 0" stroke-width="1.500"/><circle cx="8" cy="12" r="1" fill="#222"/></svg>
      <svg width="17" height="14" fill="none" stroke="#222"><path d="M1 5h3l4-3v10L4 9H1zM10 4.500q2 2.500 0 5M12 3q3 4 0 8M14 1.500q4 5.500 0 11"/></svg>
      <svg width="17" height="14"><path d="M2 4h12v8H1V8z" fill="#222"/><path d="M14 6.500h2v3h-2zM1 1l4 5" stroke="#222" fill="#222"/></svg>
    </button>
    <button class="w-[72px] text-right">14:04<br>08-02-2025</button>
    <button aria-label="Notifications" class="ml-[9px] w-[15px]"><svg width="15" height="16"><path d="M2 11V6q0-4 5-4t5 4v5l1 2H1z" fill="#222"/><path d="M5 14h4" stroke="#222" stroke-width="2"/><path d="M5 6h4L5 9.500h4" stroke="#dde" fill="none"/><path d="M11 1h3l-3 3h3" fill="none" stroke="#222"/></svg></button>
  </div>
</div>
</body>
</html>
